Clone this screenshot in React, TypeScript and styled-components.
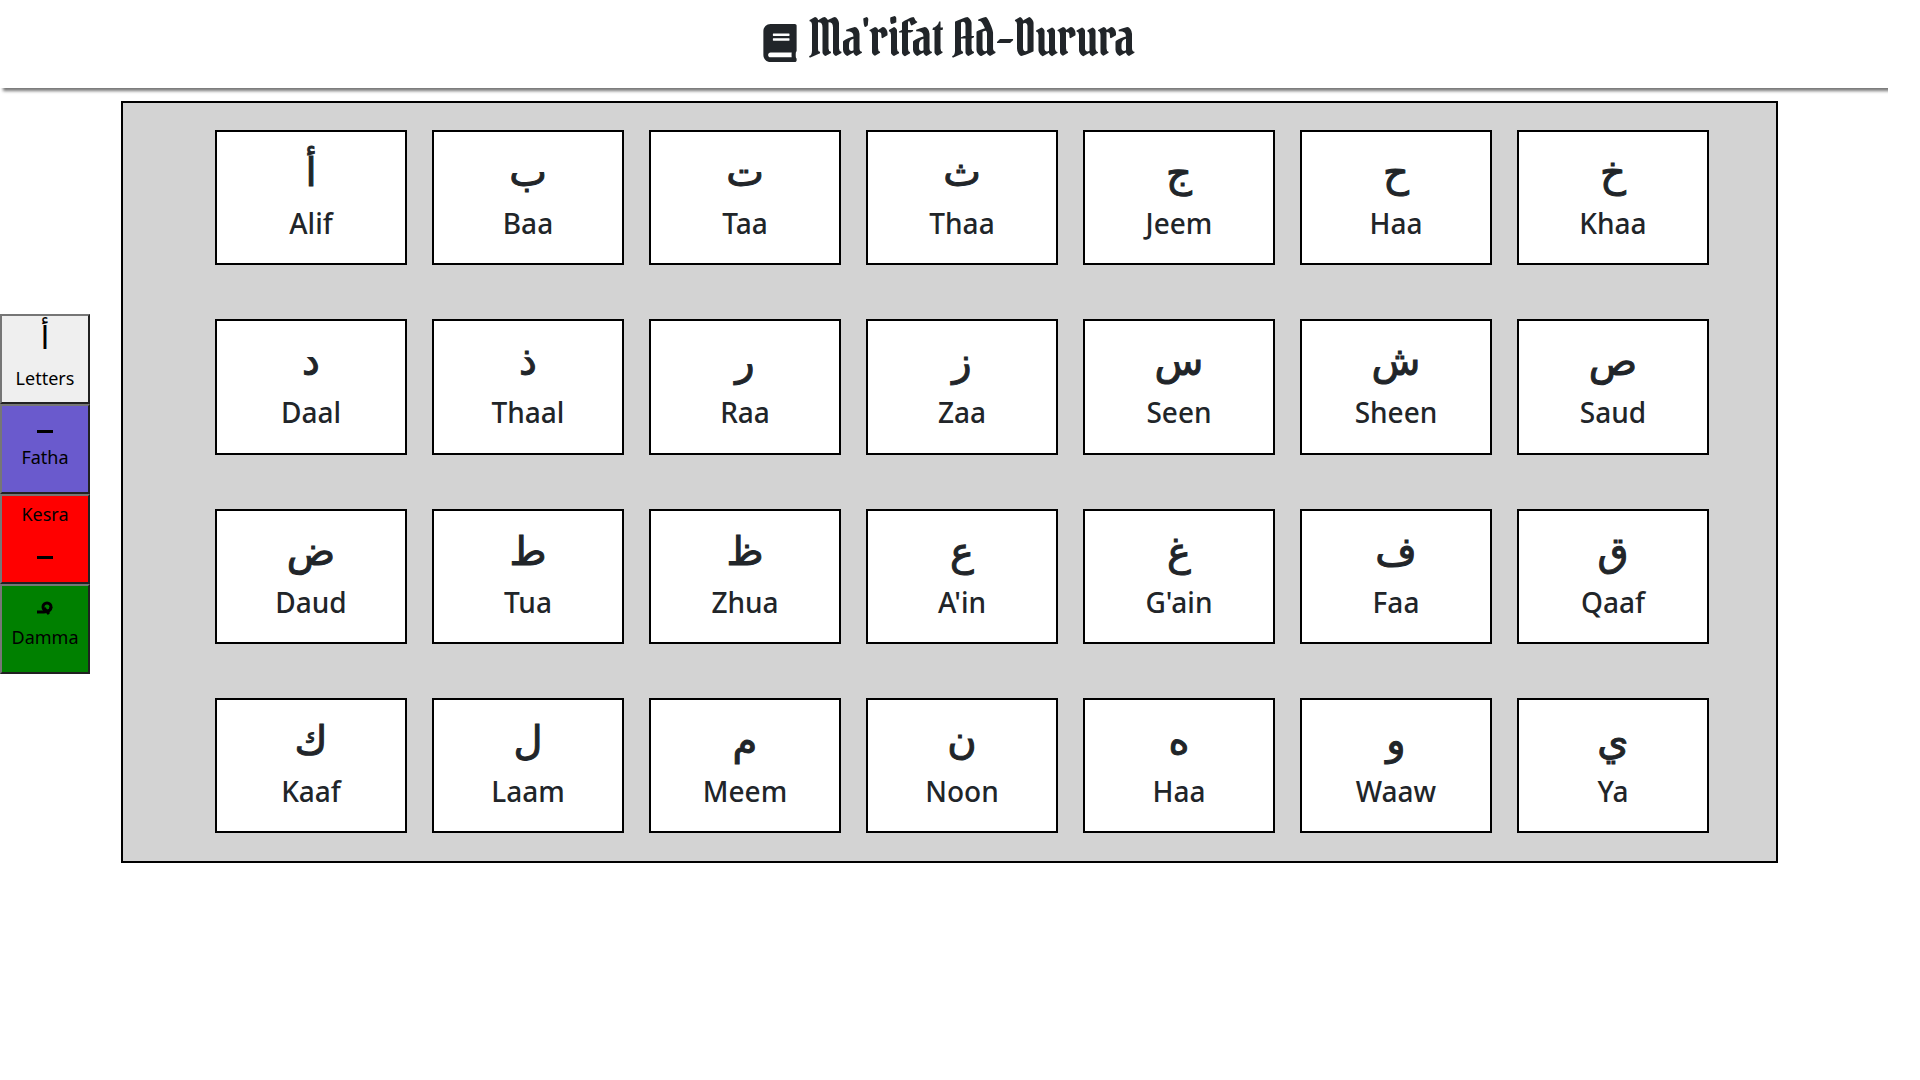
import React from "react";
import styled, { createGlobalStyle } from "styled-components";

const GlobalStyle = createGlobalStyle`
  *, *::before, *::after { box-sizing: border-box; }
  body {
    margin: 0;
    background: #fff;
    color: #212529;
    font-family: "Noto Sans", "DejaVu Sans", sans-serif;
    font-size: 16px;
    line-height: 24px;
  }
`;

const Page = styled.div`
  padding-right: 32px;
  overflow-x: hidden;
`;

const Header = styled.header`
  height: 88px;
  padding: 10px 0 0 10px;
  display: flex;
  justify-content: center;
  box-shadow: 3px 3px 3px #777;
  clip-path: inset(0 0 -10px 0);
`;

const Title = styled.h1`
  margin: 0;
  display: flex;
  align-items: center;
  gap: 12px;
  height: 56px;
  font-family: "Pirata One", "Liberation Serif", serif;
  font-size: 50px;
  line-height: 56px;
  font-weight: 500;
  white-space: nowrap;
`;

const BookIcon = styled.svg`
  width: 34px;
  height: 38px;
  margin-top: 10px;
  fill: currentColor;
`;

const Body = styled.div`
  display: flex;
  align-items: flex-start;
`;

const SideNav = styled.nav`
  flex: none;
  width: 90px;
  margin-top: 226px;
  display: flex;
  flex-direction: column;
`;

const ModeButton = styled.button<{ $bg: string }>`
  width: 90px;
  height: 90px;
  padding: 0;
  display: flex;
  flex-direction: column;
  align-items: center;
  border: 2px solid;
  border-color: #767676 #212121 #212121 #767676;
  background: ${(p) => p.$bg};
  color: #000;
  font: inherit;
  font-size: 18px;
`;

const Mark = styled.span`
  font-family: "DejaVu Sans", sans-serif;
  font-size: 32px;
  line-height: 44px;
`;

const ModeLabel = styled.span<{ $line: number }>`
  line-height: ${(p) => p.$line}px;
`;

const Panel = styled.main`
  flex: 1;
  min-width: 0;
  margin: 13px 110px 0 31px;
  padding: 27px 67px 28px 92px;
  border: 2px solid #000;
  background: #d3d3d3;
`;

const LetterGrid = styled.div`
  display: grid;
  grid-template-columns: repeat(7, 1fr);
  grid-auto-rows: 1fr;
  gap: 54px 25px;
  min-height: 703px;
`;

const Card = styled.article`
  padding-top: 16px;
  display: flex;
  flex-direction: column;
  align-items: center;
  border: 2px solid #000;
  background: #fff;
  font-weight: 500;
`;

const Glyph = styled.span`
  font-family: "DejaVu Sans", sans-serif;
  font-size: 40px;
  line-height: 48px;
  -webkit-text-stroke: 1px currentColor;
`;

const Name = styled.span`
  font-size: 28px;
  line-height: 54px;
`;

const letters: [string, string][] = [
  ["أ", "Alif"], ["ب", "Baa"], ["ت", "Taa"], ["ث", "Thaa"], ["ج", "Jeem"], ["ح", "Haa"], ["خ", "Khaa"],
  ["د", "Daal"], ["ذ", "Thaal"], ["ر", "Raa"], ["ز", "Zaa"], ["س", "Seen"], ["ش", "Sheen"], ["ص", "Saud"],
  ["ض", "Daud"], ["ط", "Tua"], ["ظ", "Zhua"], ["ع", "A'in"], ["غ", "G'ain"], ["ف", "Faa"], ["ق", "Qaaf"],
  ["ك", "Kaaf"], ["ل", "Laam"], ["م", "Meem"], ["ن", "Noon"], ["ه", "Haa"], ["و", "Waaw"], ["ي", "Ya"],
];

const Dash = styled.svg`
  width: 16px;
  height: 3px;
  fill: currentColor;
  margin: 24px 0 12px;
`;

const Curl = styled.svg`
  width: 18px;
  height: 14px;
  fill: none;
  stroke: currentColor;
  stroke-width: 3;
  margin: 15px 0 10px;
`;

export default function App() {
  return (
    <>
      <GlobalStyle />
      <Page>
        <Header>
          <Title>
            <BookIcon viewBox="0 0 448 512" aria-hidden="true">
              <path d="M448 360V24c0-13.300-10.700-24-24-24H96C43 0 0 43 0 96v320c0 53 43 96 96 96h328c13.300 0 24-10.700 24-24v-16c0-7.500-3.500-14.300-8.900-18.700-4.200-15.400-4.200-59.300 0-74.700 5.400-4.300 8.900-11.100 8.900-18.600zM128 134c0-3.300 2.700-6 6-6h212c3.300 0 6 2.700 6 6v20c0 3.300-2.700 6-6 6H134c-3.300 0-6-2.700-6-6v-20zm0 64c0-3.300 2.700-6 6-6h212c3.300 0 6 2.700 6 6v20c0 3.300-2.700 6-6 6H134c-3.300 0-6-2.700-6-6v-20zm253.400 250H96c-17.700 0-32-14.300-32-32 0-17.600 14.400-32 32-32h285.400c-1.900 17.100-1.900 46.900 0 64z" />
            </BookIcon>
            Ma'rifat Ad-Durura
          </Title>
        </Header>
        <Body>
          <SideNav aria-label="Vowel marks">
            <ModeButton $bg="#efefef">
              <Mark lang="ar">أ</Mark>
              <ModeLabel $line={36}>Letters</ModeLabel>
            </ModeButton>
            <ModeButton $bg="#6a5acd">
              <Dash viewBox="0 0 16 3" aria-hidden="true"><path d="M0 0h16v3H0z" /></Dash>
              <ModeLabel $line={24}>Fatha</ModeLabel>
            </ModeButton>
            <ModeButton $bg="#ff0000">
              <ModeLabel $line={36}>Kesra</ModeLabel>
              <Dash viewBox="0 0 16 3" aria-hidden="true"><path d="M0 0h16v3H0z" /></Dash>
            </ModeButton>
            <ModeButton $bg="#008000">
              <Curl viewBox="0 0 18 14" aria-hidden="true">
                <circle cx="11" cy="6" r="4" />
                <path d="M15 6c0 3-3 5-7 5H1M8 7l5 6" />
              </Curl>
              <ModeLabel $line={24}>Damma</ModeLabel>
            </ModeButton>
          </SideNav>
          <Panel>
            <LetterGrid>
              {letters.map(([glyph, name]) => (
                <Card key={glyph}>
                  <Glyph lang="ar">{glyph}</Glyph>
                  <Name>{name}</Name>
                </Card>
              ))}
            </LetterGrid>
          </Panel>
        </Body>
      </Page>
    </>
  );
}
